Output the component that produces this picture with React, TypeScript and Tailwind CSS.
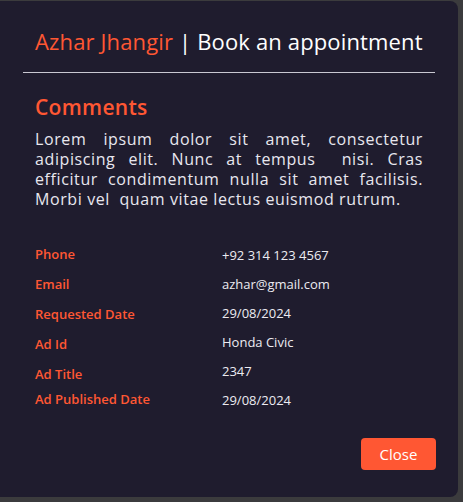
import React from "react";

const rows: [string, string][] = [
  ["Phone", "+92 314 123 4567"],
  ["Email", "azhar@gmail.com"],
  ["Requested Date", "29/08/2024"],
  ["Ad Id", "Honda Civic"],
  ["Ad Title", "2347"],
  ["Ad Published Date", "29/08/2024"],
];

export default function App() {
  const font = { fontFamily: '"Open Sans", "Noto Sans", sans-serif' };
  return (
    <div className="w-[463px] h-[502px] bg-[#3b3b3d] pt-px overflow-hidden" style={font}>
      <div className="w-[458px] h-[496px] bg-[#1f1c2e] rounded-r-lg flex flex-col">
        <div className="h-[71px] flex items-center pl-[35px] pt-[8px] text-[22px] leading-none tracking-[0.15px]">
          <span className="text-[#ff5733]">Azhar Jhangir</span>
          <span className="text-white whitespace-pre"> | Book an appointment</span>
        </div>
        <div className="ml-[23px] w-[412px] h-px bg-[#c9c8d2]" />
        <div className="px-[35px] pt-[22px]">
          <h2 className="text-[#ff5733] text-[21px] font-semibold leading-[24px] tracking-[0.3px]">Comments</h2>
          <div className="mt-[10px] text-[#e8e7ee] text-[16px] leading-[20px] w-[388px] tracking-[0.6px]">
            <p className="text-justify [text-align-last:justify]">Lorem ipsum dolor sit amet, consectetur</p>
            <p className="text-justify [text-align-last:justify] whitespace-pre-wrap">adipiscing elit. Nunc at tempus  nisi. Cras</p>
            <p className="text-justify [text-align-last:justify]">efficitur condimentum nulla sit amet facilisis.</p>
            <p className="whitespace-pre-wrap">Morbi vel  quam vitae lectus euismod rutrum.</p>
          </div>
        </div>
        <div className="flex pl-[35px] pt-[37px] text-[13px] leading-[16px]">
          <div className="w-[187px] flex flex-col text-[#ff5733] font-semibold">
            {rows.map(([l], i) => (
              <div key={l} className={i === 4 ? "h-[25px]" : "h-[30px]"}>{l}</div>
            ))}
          </div>
          <div className="flex flex-col pt-px text-[#ecebf1]">
            {rows.map(([l, v], i) => (
              <div key={l} className={i === 4 ? "h-[29px]" : "h-[29px]"}>{v}</div>
            ))}
          </div>
        </div>
        <div className="flex justify-end pr-[22px] pt-[17px]">
          <button className="w-[75px] h-[32px] rounded bg-[#ff5733] text-white text-[15px]">Close</button>
        </div>
      </div>
    </div>
  );
}
